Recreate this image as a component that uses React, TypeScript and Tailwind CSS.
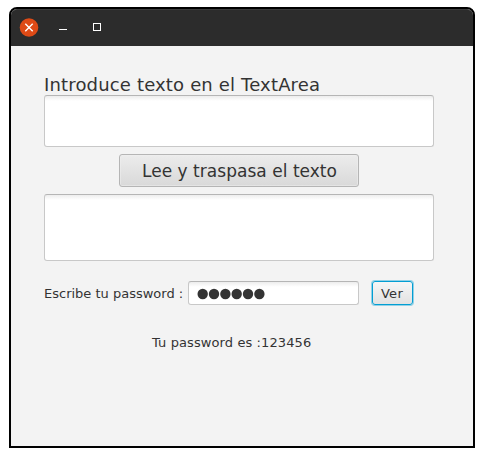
import React from "react";

const boxStyle =
  "rounded-[3px] border border-[#c8c8c8] border-t-[#b5b5b5] bg-white bg-[linear-gradient(to_bottom,#ededed_0px,#ffffff_5px)]";

function TitleBar() {
  return (
    <header className="flex h-[37px] shrink-0 items-center rounded-t-[6px] border-t border-[#3c3c3c] bg-[#2c2c2c] pl-[8px]">
      <svg width="90" height="20" viewBox="0 0 90 20" aria-hidden="true">
        <circle cx="10" cy="9.5" r="9.3" fill="#de4a16" />
        <path d="M6.3 5.8 L13.7 13.2 M13.7 5.8 L6.3 13.2" stroke="#fff" strokeWidth="1.4" fill="none" />
        <rect x="40" y="11" width="8" height="1" fill="#fff" />
        <rect x="74.5" y="5.5" width="7" height="7" fill="none" stroke="#fff" />
      </svg>
    </header>
  );
}

export default function App() {
  return (
    <div className="h-[457px] w-[484px] bg-white pl-[9px] pt-[7px] font-['DejaVu_Sans',sans-serif] text-[#333333]">
      <main className="flex h-[441px] w-[466px] flex-col rounded-t-[8px] border-2 border-black bg-[#f3f3f3]">
        <TitleBar />
        <section className="flex flex-col pl-[33px] pt-[28px]">
          <label className="h-[21px] whitespace-nowrap text-[18px] leading-[21px] tracking-[0.16px]">
            Introduce texto en el TextArea
          </label>
          <textarea className={`${boxStyle} block h-[52px] w-[390px] resize-none outline-none`} />
          <button className="ml-[75px] mt-[7px] h-[33px] w-[240px] whitespace-nowrap rounded-[3px] border border-[#b5b5b5] bg-linear-to-b from-[#ececec] to-[#d9d9d9] pl-px pt-px text-[17px] leading-[31px] tracking-[0.03px] shadow-[inset_0_0_0_1px_#f0f0f080]">
            Lee y traspasa el texto
          </button>
          <textarea className={`${boxStyle} mt-[7px] block h-[67px] w-[390px] resize-none outline-none`} />
          <div className="mt-[19px] flex h-[26px] items-center text-[13px]">
            <label className="w-[144px] whitespace-nowrap pt-[2px]">Escribe tu password :</label>
            <div className={`${boxStyle} flex h-[24px] w-[171px] items-center pl-[8px] pt-[2px]`}>
              <svg width="70" height="12" viewBox="0 0 70 12" fill="#333333" aria-hidden="true">
                <circle cx="5.7" cy="6" r="5.2" />
                <circle cx="17" cy="6" r="5.2" />
                <circle cx="28.4" cy="6" r="5.2" />
                <circle cx="39.7" cy="6" r="5.2" />
                <circle cx="51" cy="6" r="5.2" />
                <circle cx="62.4" cy="6" r="5.2" />
              </svg>
            </div>
            <button className="ml-[13px] h-[24px] w-[41px] rounded-[3px] border border-[#039ed3] bg-linear-to-b from-[#f6f6f6] to-[#e2e2e2] pr-px pt-[2px] text-[13px] leading-[20px] tracking-[0.3px] shadow-[0_0_0_1px_#039ed366]">
              Ver
            </button>
          </div>
          <p className="ml-[108px] mt-[29px] whitespace-nowrap text-[13px] leading-[16px] tracking-[0.1px]">
            Tu password es :123456
          </p>
        </section>
      </main>
    </div>
  );
}
